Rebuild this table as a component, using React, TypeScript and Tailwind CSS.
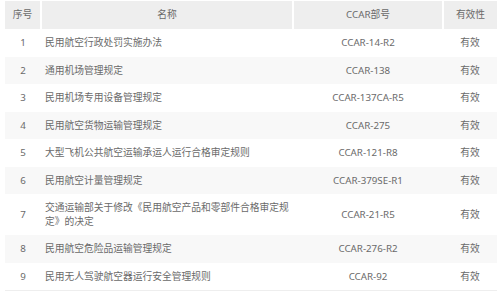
const rows = [
  { no: 1, name: ["民用航空行政处罚实施办法"], code: "CCAR-14-R2" },
  { no: 2, name: ["通用机场管理规定"], code: "CCAR-138" },
  { no: 3, name: ["民用机场专用设备管理规定"], code: "CCAR-137CA-R5" },
  { no: 4, name: ["民用航空货物运输管理规定"], code: "CCAR-275" },
  { no: 5, name: ["大型飞机公共航空运输承运人运行合格审定规则"], code: "CCAR-121-R8" },
  { no: 6, name: ["民用航空计量管理规定"], code: "CCAR-379SE-R1" },
  { no: 7, name: ["交通运输部关于修改《民用航空产品和零部件合格审定规", "定》的决定"], code: "CCAR-21-R5" },
  { no: 8, name: ["民用航空危险品运输管理规定"], code: "CCAR-276-R2" },
  { no: 9, name: ["民用无人驾驶航空器运行安全管理规则"], code: "CCAR-92" },
];

export default function App() {
  return (
    <div className="w-[500px] h-[291px] overflow-hidden bg-white pl-[5px] pr-[3px] pt-px font-['Noto_Sans','Noto_Sans_CJK_SC',sans-serif] text-[9.75px] leading-[13.5px] text-[#6a6a6a]">
      <table className="w-full table-fixed border-collapse">
        <colgroup>
          <col className="w-[36px]" />
          <col className="w-[252px]" />
          <col className="w-[150px]" />
          <col />
        </colgroup>
        <thead>
          <tr className="h-[28px] bg-[#eeeeee]">
            <th className="font-normal text-center border-r-2 border-white">序号</th>
            <th className="font-normal text-center border-r-2 border-white">名称</th>
            <th className="font-normal text-center border-r-2 border-white">CCAR部号</th>
            <th className="font-normal text-center">有效性</th>
          </tr>
        </thead>
        <tbody>
          {rows.map((r, i) => (
            <tr
              key={r.no}
              className={`${i === rows.length - 1 ? "border-b border-[#eeeeee]" : ""} ${i % 2 === 1 ? "bg-[#f8f8f8]" : "bg-white"}`}
            >
              <td className="py-[7px] text-center align-middle">{r.no}</td>
              <td className="py-[7px] pl-[4px] pr-[2px] text-left align-middle">
                {r.name.map((line, j) => (
                  <span key={j} className="block whitespace-nowrap">
                    {line}
                  </span>
                ))}
              </td>
              <td className="py-[7px] text-center align-middle">{r.code}</td>
              <td className="py-[7px] text-center align-middle">有效</td>
            </tr>
          ))}
        </tbody>
      </table>
    </div>
  );
}
